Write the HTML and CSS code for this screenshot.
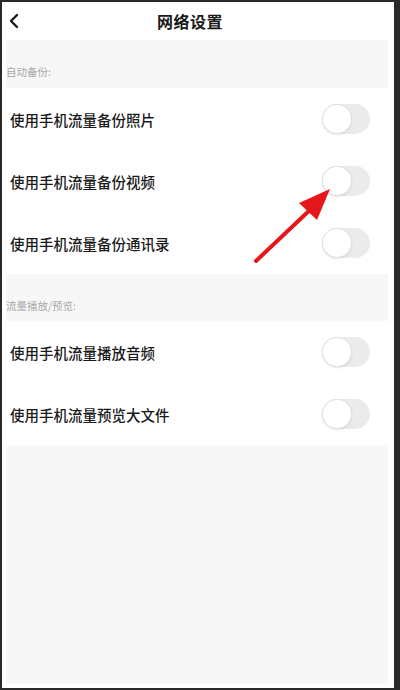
FILE: index.html
```html
<!DOCTYPE html>
<html lang="zh-CN">
<head>
<meta charset="utf-8">
<title>网络设置</title>
<link rel="stylesheet" href="styles.css">
</head>
<body>
<div class="screen">
  <header class="topbar">
    <span class="back">
      <svg width="12" height="16" viewBox="0 0 12 16"><path d="M9 2 L3 8 L9 14" fill="none" stroke="#1a1a1a" stroke-width="2.4" stroke-linecap="round" stroke-linejoin="round"/></svg>
    </span>
    <h1 class="title">网络设置</h1>
    <span></span>
  </header>
  <main class="content">
    <div class="section">自动备份:</div>
    <div class="row"><span class="label">使用手机流量备份照片</span><span class="toggle"><span class="knob"></span></span></div>
    <div class="row"><span class="label">使用手机流量备份视频</span><span class="toggle"><span class="knob"></span></span></div>
    <div class="row"><span class="label">使用手机流量备份通讯录</span><span class="toggle"><span class="knob"></span></span></div>
    <div class="section short">流量播放/预览:</div>
    <div class="row"><span class="label">使用手机流量播放音频</span><span class="toggle"><span class="knob"></span></span></div>
    <div class="row"><span class="label">使用手机流量预览大文件</span><span class="toggle"><span class="knob"></span></span></div>
    <div class="filler"></div>
  </main>
  <svg class="arrow" width="400" height="690" viewBox="0 0 400 690">
    <line x1="256" y1="261" x2="312" y2="208" stroke="#e5161c" stroke-width="4" stroke-linecap="round"/>
    <polygon points="330,189 299,203 317,220" fill="#e5161c"/>
  </svg>
</div>
</body>
</html>
```
FILE: styles.css
```css
html, body {
  margin: 0;
  padding: 0;
}
body {
  background: #2a2a2a;
  width: 400px;
  height: 690px;
  overflow: hidden;
  font-family: "Noto Sans CJK SC", "Noto Sans", sans-serif;
}
.screen {
  margin: 2px 6px 2px 2px;
  width: 392px;
  height: 686px;
  background: #ffffff;
  display: flex;
  flex-direction: column;
}
.topbar {
  height: 38px;
  flex: none;
  display: grid;
  grid-template-columns: 32px 1fr 48px;
  align-items: center;
}
.back {
  display: flex;
  align-items: center;
  padding-left: 6px;
  height: 16px;
}
.title {
  margin: 0;
  text-align: center;
  font-size: 16px;
  font-weight: 700;
  color: #1a1a1a;
  letter-spacing: 0.5px;
}
.content {
  flex: 1;
  display: flex;
  flex-direction: column;
  margin: 0 6px 4px 4px;
}
.section {
  height: 48px;
  background: #f7f7f7;
  box-sizing: border-box;
  padding-top: 25px;
  font-size: 10.5px;
  line-height: 14px;
  color: #a8a8a8;
}
.section.short {
  height: 47px;
}
.row {
  height: 62px;
  display: flex;
  align-items: center;
  justify-content: space-between;
  padding: 0 18px 0 4px;
  background: #ffffff;
}
.label {
  font-size: 14.5px;
  font-weight: 500;
  color: #1a1a1a;
}
.toggle {
  width: 48px;
  height: 30px;
  border-radius: 15px;
  background: #ebebeb;
  position: relative;
  display: flex;
  align-items: center;
}
.knob {
  width: 28px;
  height: 28px;
  margin-left: 1px;
  border-radius: 50%;
  background: #ffffff;
  box-shadow: 0 0 0 1px #e2e2e2, 0 1px 3px rgba(0,0,0,0.18);
}
.filler {
  flex: 1;
  background: #f7f7f7;
}
.arrow {
  position: absolute;
  left: 0;
  top: 0;
  pointer-events: none;
}
```
